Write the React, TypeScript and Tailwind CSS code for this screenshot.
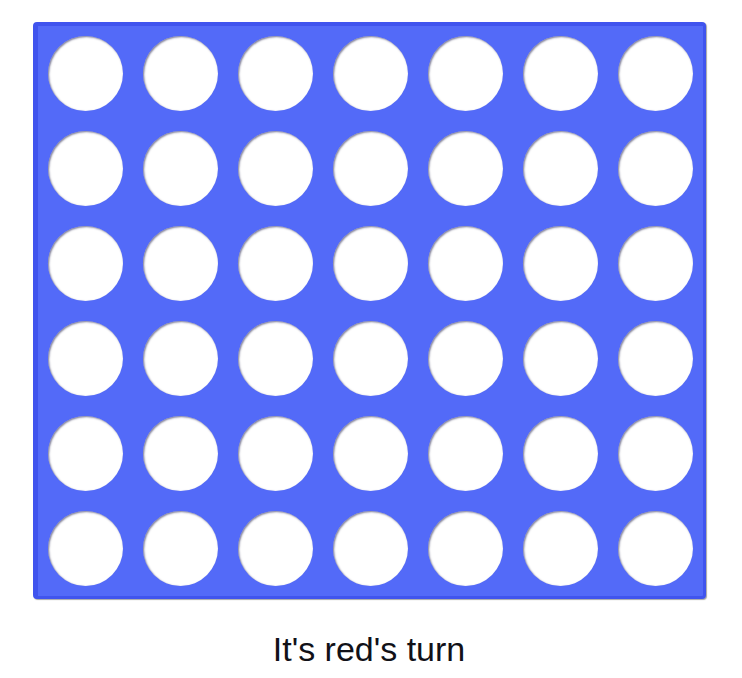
import React from "react"

const ROWS = 6
const COLS = 7

export default function App() {
  const cells = Array.from({ length: ROWS * COLS }, (_, i) => i)

  return (
    <main className="flex flex-col items-center min-h-screen bg-white pt-[22px] pr-[4px]" style={{ fontFamily: "'Liberation Sans', Arial, sans-serif" }}>
      <div className="rounded-[4px] border-solid border-l-[5px] border-t-4 border-r-[3px] border-b-[3px] border-[#4054ee] bg-[#536af8] p-[10px] shadow-[1px_1px_1px_rgba(0,0,0,0.35)]">
        <div className="grid grid-cols-[repeat(7,75px)] gap-[20px]">
          {cells.map((c) => (
            <div key={c} className="w-[75px] h-[75px] rounded-full bg-white shadow-[inset_1px_1px_2px_rgba(40,40,80,0.6)]" />
          ))}
        </div>
      </div>
      <p className="mt-[29px] text-[34px] leading-[42px] text-[#111118]">It's red's turn</p>
    </main>
  )
}
